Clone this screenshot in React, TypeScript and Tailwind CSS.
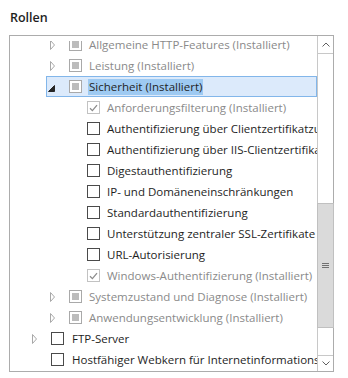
import type { ReactNode } from "react";

type Box = "ind" | "checked" | "off";

interface RowData {
  level: number;
  arrow?: "right" | "down";
  box: Box;
  label: string;
  installed?: boolean;
  selected?: boolean;
}

const rows: RowData[] = [
  { level: 1, arrow: "right", box: "ind", label: "Allgemeine HTTP-Features (Installiert)", installed: true },
  { level: 1, arrow: "right", box: "ind", label: "Leistung (Installiert)", installed: true },
  { level: 1, arrow: "down", box: "ind", label: "Sicherheit (Installiert)", selected: true },
  { level: 2, box: "checked", label: "Anforderungsfilterung (Installiert)", installed: true },
  { level: 2, box: "off", label: "Authentifizierung über Clientzertifikatzuordnung" },
  { level: 2, box: "off", label: "Authentifizierung über IIS-Clientzertifikatzuordnung" },
  { level: 2, box: "off", label: "Digestauthentifizierung" },
  { level: 2, box: "off", label: "IP- und Domäneneinschränkungen" },
  { level: 2, box: "off", label: "Standardauthentifizierung" },
  { level: 2, box: "off", label: "Unterstützung zentraler SSL-Zertifikate" },
  { level: 2, box: "off", label: "URL-Autorisierung" },
  { level: 2, box: "checked", label: "Windows-Authentifizierung (Installiert)", installed: true },
  { level: 1, arrow: "right", box: "ind", label: "Systemzustand und Diagnose (Installiert)", installed: true },
  { level: 1, arrow: "right", box: "ind", label: "Anwendungsentwicklung (Installiert)", installed: true },
  { level: 0, arrow: "right", box: "off", label: "FTP-Server" },
  { level: 0, box: "off", label: "Hostfähiger Webkern für Internetinformationsdienste" },
];

const indent = ["pl-[18px]", "pl-[36px]", "pl-[54px]"];

function Arrow({ kind }: { kind?: "right" | "down" }) {
  if (kind === "right") {
    return (
      <svg width="6" height="10" viewBox="0 0 6 10" className="ml-[4px]">
        <path d="M0.5 0.5 L4.5 5 L0.5 9.5 Z" fill="none" stroke="#a8a8a8" strokeWidth="1" />
      </svg>
    );
  }
  if (kind === "down") {
    return (
      <svg width="7" height="7" viewBox="0 0 7 7" className="ml-[2px] mt-[4px]">
        <path d="M6.5 0.5 L6.5 6.5 L0.5 6.5 Z" fill="#262626" stroke="#262626" strokeWidth="1" />
      </svg>
    );
  }
  return null;
}

function CheckBox({ state }: { state: Box }) {
  if (state === "ind") {
    return (
      <div className="w-[13px] h-[13px] shrink-0 border border-[#a9a9a9] bg-white flex items-center justify-center">
        <div className="w-[7px] h-[7px] bg-[#bcbcbc]" />
      </div>
    );
  }
  if (state === "checked") {
    return (
      <div className="w-[13px] h-[13px] shrink-0 border border-[#c2c2c2] bg-white flex items-center justify-center">
        <svg width="9" height="8" viewBox="0 0 9 8">
          <path d="M1 4.2 L3.4 6.6 L8 1.2" fill="none" stroke="#8c8c8c" strokeWidth="1.3" />
        </svg>
      </div>
    );
  }
  return <div className="w-[13px] h-[13px] shrink-0 border border-[#4a4a4a] bg-white" />;
}

function Row({ row }: { row: RowData }) {
  const label: ReactNode = row.selected ? (
    <span className="bg-[#9ecaf2] leading-[16px] px-[1px] -ml-[1px] inline-block">{row.label}</span>
  ) : (
    row.label
  );
  return (
    <div className={`h-[21px] flex ${indent[row.level]}`}>
      <div
        className={`flex-1 flex items-center whitespace-nowrap ${
          row.selected ? "bg-[#dceafb] ring-1 ring-inset ring-[#82b6ea]" : ""
        }`}
      >
        <div className="w-[23px] shrink-0 flex items-center">
          <Arrow kind={row.arrow} />
        </div>
        <CheckBox state={row.box} />
        <span
          className={`text-[11.5px] ${
            row.installed ? "text-[#8a8a8a]" : "text-[#1e1e1e]"
          } ${row.level === 0 ? "ml-[8px]" : "ml-[7px]"}`}
        >
          {label}
        </span>
      </div>
    </div>
  );
}

function ScrollBar() {
  return (
    <div className="w-[16px] shrink-0 border-l border-[#c8c8c8] flex flex-col bg-white">
      <div className="h-[18px] border-b border-[#c8c8c8] flex items-center justify-center">
        <svg width="8" height="5" viewBox="0 0 8 5">
          <path d="M0.5 4.5 L4 1 L7.5 4.5" fill="none" stroke="#606060" strokeWidth="1" />
        </svg>
      </div>
      <div className="flex-1 pt-[149px]">
        <div className="h-[125px] -ml-[1px] -mr-[1px] bg-[#dadada] border border-[#c0c0c0] flex flex-col items-center justify-center gap-[1px]">
          <div className="w-[7px] h-[1px] bg-[#707070]" />
          <div className="w-[7px] h-[1px] bg-[#707070]" />
          <div className="w-[7px] h-[1px] bg-[#707070]" />
        </div>
      </div>
      <div className="h-[16px] border-t border-[#c8c8c8] flex items-center justify-center">
        <svg width="8" height="5" viewBox="0 0 8 5">
          <path d="M0.5 0.5 L4 4 L7.5 0.5" fill="none" stroke="#606060" strokeWidth="1" />
        </svg>
      </div>
    </div>
  );
}

export default function App() {
  return (
    <div
      className="w-[348px] h-[378px] bg-white overflow-hidden pl-[9px] pt-[9px]"
      style={{ fontFamily: '"Open Sans", "Noto Sans", sans-serif' }}
    >
      <div className="h-[26px] text-[12.5px] font-semibold text-[#1e1e1e] leading-[18px] pl-[1px]">
        Rollen
      </div>
      <div className="w-[325px] h-[337px] border border-[#acacac] flex bg-white">
        <div className="flex-1 pt-[5px] flex flex-col min-w-0">
          <div className="flex-1 overflow-hidden">
            <div className="-mt-[7px]">
              {rows.map((r) => (
                <Row key={r.label} row={r} />
              ))}
            </div>
          </div>
        </div>
        <ScrollBar />
      </div>
    </div>
  );
}
